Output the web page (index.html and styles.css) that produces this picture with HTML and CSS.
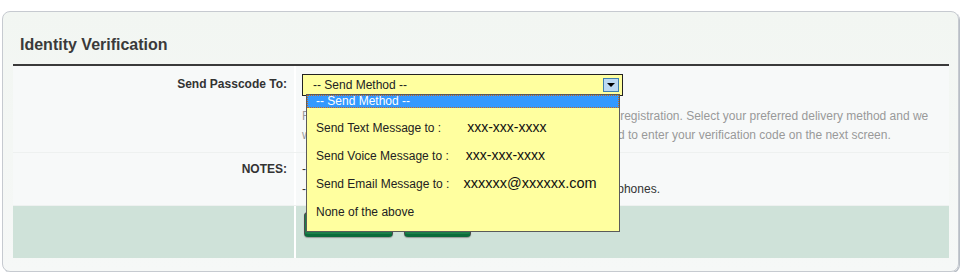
FILE: index.html
```html
<!DOCTYPE html>
<html lang="en">
<head>
    <meta charset="UTF-8">
    <title>Identity Verification</title>
    <link rel="stylesheet" href="styles.css">
</head>
<body>

    <div class="panel">
        <h2 class="panel-title">Identity Verification</h2>

        <div class="form">
            <div class="row">
                <div class="label">Send Passcode To:</div>
                <div class="field">
                    <div class="select-wrap">
                        <div class="select">
                            -- Send Method --
                            <span class="select-arrow"></span>
                        </div>

                        <ul class="dropdown">
                            <li class="selected">-- Send Method --</li>
                            <li>Send Text Message to :<span class="value gap-text">xxx-xxx-xxxx</span></li>
                            <li>Send Voice Message to :<span class="value gap-voice">xxx-xxx-xxxx</span></li>
                            <li>Send Email Message to :<span class="value email gap-email">xxxxxx@xxxxxx.com</span></li>
                            <li>None of the above</li>
                        </ul>
                    </div>
                    <p class="help">
                        For your protection, we verify your identity to complete your registration. Select your preferred delivery method and we<br>
                        will send you a onetime passcode immediately. You will need to enter your verification code on the next screen.
                    </p>
                </div>
            </div>

            <div class="row">
                <div class="label label-notes">NOTES:</div>
                <div class="field field-notes">
                    <p class="notes">
                        - Passcodes expire after 10 minutes.<br>
                        - Text messages can only be sent to your mobile or cellular phones.
                    </p>
                </div>
            </div>

            <div class="row row-actions">
                <div class="label"></div>
                <div class="field">
                    <button class="btn btn-continue">Continue</button>
                    <button class="btn btn-cancel">Cancel</button>
                </div>
            </div>
        </div>
    </div>

</body>
</html>
```

FILE: styles.css
```css
body {
    margin: 0;
    background: #fff;
    font-family: "Liberation Sans", Arial, sans-serif;
    font-size: 12px;
    color: #333;
}

.panel {
    box-sizing: border-box;
    width: 957px;
    height: 261px;
    margin: 11px 0 0 2px;
    padding: 0 9px 0 10px;
    background: linear-gradient(#f2f6f2, #f6f8f7);
    border: 1px solid #c6cad0;
    border-radius: 8px;
    box-shadow: 1px 1px 0 #b8bec6;
}

.panel-title {
    margin: 0;
    padding: 23px 7px 9px;
    font-size: 16px;
    line-height: 20px;
    color: #3a3a3a;
    border-bottom: 2px solid #3a3a3a;
}

.row {
    display: grid;
    grid-template-columns: 283px 1fr;
    background: #f7f9f9;
    border-bottom: 1px solid #eef1f0;
}

.label {
    padding: 8px 7px 0 0;
    text-align: right;
    font-weight: bold;
    line-height: 20px;
    color: #333;
    border-right: 2px solid #fff;
}

.label-notes {
    padding-top: 6px;
}

.field {
    padding: 8px 6px 7px;
}

.field-notes {
    padding-bottom: 6px;
}

.select-wrap {
    position: relative;
    width: 321px;
}

.select {
    box-sizing: border-box;
    height: 22px;
    padding-left: 10px;
    line-height: 20px;
    background: #ffff9f;
    border: 1px solid #222;
    color: #222;
}

.select-arrow {
    position: absolute;
    top: 4px;
    right: 4px;
    box-sizing: border-box;
    width: 16px;
    height: 14px;
    background: #bcd9f2;
    border: 1px solid #3f7fae;
}

.select-arrow::after {
    content: "";
    position: absolute;
    left: 3px;
    top: 4px;
    border-left: 4px solid transparent;
    border-right: 4px solid transparent;
    border-top: 4px solid #000;
}

.dropdown {
    position: absolute;
    top: 20px;
    left: 4px;
    box-sizing: border-box;
    width: 314px;
    margin: 0;
    padding: 0 0 5px;
    list-style: none;
    background: #ffff9f;
    border: 1px solid #5a5a5a;
    color: #222;
    z-index: 2;
}

.dropdown li {
    height: 28px;
    padding-left: 9px;
    line-height: 28px;
    white-space: nowrap;
}

.dropdown li.selected {
    height: 13px;
    margin-bottom: 6px;
    line-height: 13px;
    background: #3399ff;
    color: #fff;
    outline: 1px dotted #c8691c;
    outline-offset: -1px;
}

.value {
    font-size: 14px;
    line-height: 1;
    color: #111;
}

.email {
    font-size: 14.5px;
}

.gap-text {
    margin-left: 26px;
}

.gap-voice {
    margin-left: 17px;
}

.gap-email {
    margin-left: 14px;
}

.help {
    margin: 11px 0 0;
    line-height: 19px;
    color: #999;
    white-space: nowrap;
}

.notes {
    margin: -2px 0 0;
    line-height: 20px;
    color: #333;
    white-space: nowrap;
}

.row-actions {
    height: 52px;
    background: #cfe2d9;
    border-bottom: none;
}

.row-actions .field {
    padding: 6px 0 0 8px;
}

.btn {
    height: 25px;
    padding: 0 14px;
    border: 1px solid #4b4b4b;
    border-bottom: 3px solid #0b6b3b;
    border-radius: 4px;
    background: #1c7f4a;
    color: #fff;
    font-family: inherit;
    font-size: 12px;
    font-weight: bold;
    box-shadow: 0 1px 1px #999;
}

.btn-continue {
    width: 89px;
}

.btn-cancel {
    width: 67px;
    margin-left: 8px;
}
```
